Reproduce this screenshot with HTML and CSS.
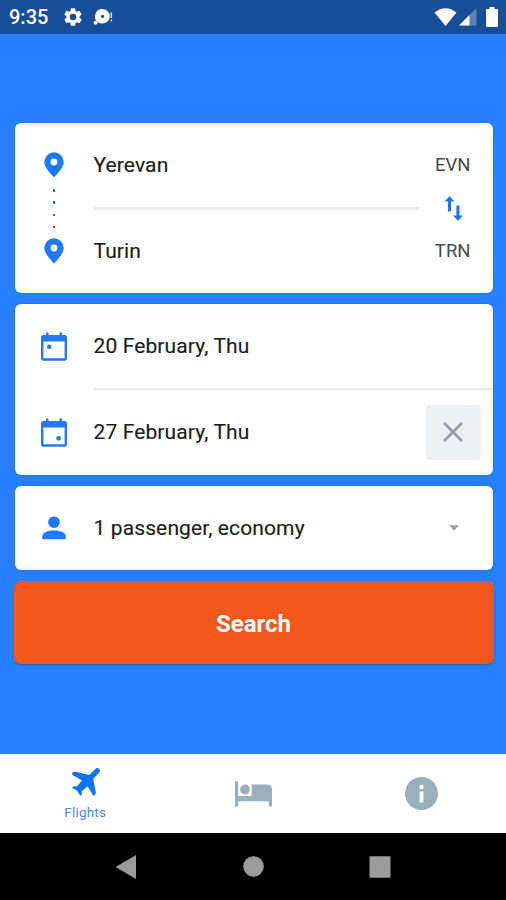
FILE: index.html
```html
<!DOCTYPE html>
<html lang="en">
<head>
<meta charset="utf-8">
<title>Flights</title>
<link rel="stylesheet" href="styles.css">
</head>
<body>
<header class="status">
  <span class="clock">9:35</span>
  <svg class="gear" width="22" height="22" viewBox="0 0 24 24"><path d="M19.14 12.94c.04-.3.06-.61.06-.94s-.02-.64-.07-.94l2.03-1.58c.18-.14.23-.41.12-.61l-1.92-3.32c-.12-.22-.37-.29-.59-.22l-2.39.96c-.5-.38-1.03-.7-1.62-.94L14.4 2.81c-.04-.24-.24-.41-.48-.41h-3.84c-.24 0-.43.17-.47.41l-.36 2.54c-.59.24-1.13.57-1.62.94l-2.39-.96c-.22-.08-.47 0-.59.22L2.74 8.87c-.12.21-.08.47.12.61l2.03 1.58c-.05.3-.09.63-.09.94s.02.64.07.94l-2.03 1.58c-.18.14-.23.41-.12.61l1.92 3.32c.12.22.37.29.59.22l2.39-.96c.5.38 1.03.7 1.62.94l.36 2.54c.05.24.24.41.48.41h3.84c.24 0 .44-.17.47-.41l.36-2.54c.59-.24 1.13-.56 1.62-.94l2.39.96c.22.08.47 0 .59-.22l1.92-3.32c.12-.22.07-.47-.12-.61zM12 15.600A3.600 3.600 0 1 1 12 8.400a3.600 3.600 0 0 1 0 7.200z"/></svg>
  <svg class="disc" width="20" height="18" viewBox="0 0 20 18"><path fill-rule="evenodd" d="M9.500 1a7.300 7.300 0 1 1 0 14.600a7.300 7.300 0 0 1-4.500-1.400a7.300 7.300 0 0 1 4.500-13.200zM9.500 6.800a1.600 1.600 0 1 0 0 3.200a1.600 1.600 0 0 0 0-3.200z"/><circle cx="2.600" cy="14.800" r="2"/><path opacity=".8" d="M17.500 4.500h1.600v5.500h-1.600zM17.500 11.500h1.600v2h-1.600z"/></svg>
  <span class="signals">
    <svg width="23" height="20" viewBox="0 0 23 20"><path d="M.5 5.500Q11.500-3 22.500 5.500L11.500 19z"/></svg>
    <svg width="18" height="18" viewBox="0 0 18 18"><path opacity=".3" d="M17.500 0v17.500H0z"/><path d="M10.500 7v10.500H0z"/></svg>
    <svg class="battery" width="12" height="20" viewBox="0 0 12 20"><path d="M3.500 0h5v2H11q1 0 1 1v16q0 1-1 1H1q-1 0-1-1V3q0-1 1-1h2.500z"/></svg>
  </span>
</header>

<main class="app">
  <section class="card route">
    <div class="pins">
      <svg width="20" height="26" viewBox="0 0 20 26"><path fill-rule="evenodd" d="M10 .3a9.700 9.700 0 0 1 9.700 9.700C19.700 15 14.500 20.500 10 25.500C5.500 20.500.3 15 .3 10A9.700 9.700 0 0 1 10 .3zM10 6.600a3.400 3.400 0 1 0 0 6.800a3.400 3.400 0 0 0 0-6.800z"/></svg>
      <span class="dots"><i></i><i></i><i></i><i></i></span>
      <svg width="20" height="26" viewBox="0 0 20 26"><path fill-rule="evenodd" d="M10 .3a9.700 9.700 0 0 1 9.700 9.700C19.700 15 14.500 20.500 10 25.500C5.500 20.500.3 15 .3 10A9.700 9.700 0 0 1 10 .3zM10 6.600a3.400 3.400 0 1 0 0 6.800a3.400 3.400 0 0 0 0-6.800z"/></svg>
    </div>
    <div class="cities">
      <div class="place"><span class="label">Yerevan</span><span class="code">EVN</span></div>
      <div class="swap">
        <hr>
        <svg width="20" height="27" viewBox="0 0 20 27"><path d="M5.500 1.200L10.500 6.600H7V16.500H4V6.600H.5zM13.900 25.800L8.900 20.400H12.400V10.500h3V20.400h3.500z"/></svg>
      </div>
      <div class="place"><span class="label">Turin</span><span class="code">TRN</span></div>
    </div>
  </section>

  <section class="card dates">
    <div class="row">
      <svg class="icon" width="26" height="29" viewBox="0 0 26 29"><path fill-rule="evenodd" d="M5 .5h2.400V3h11.200V.5H21V3h2.500Q26 3 26 5.500v20.700q0 2.500-2.500 2.500h-21Q0 28.700 0 26.200V5.500Q0 3 2.500 3H5zM2.400 9.500v16.700h21.200V9.500z"/><circle cx="8.200" cy="14.800" r="2.200"/></svg>
      <span class="label">20 February, Thu</span>
    </div>
    <hr>
    <div class="row">
      <svg class="icon" width="26" height="29" viewBox="0 0 26 29"><path fill-rule="evenodd" d="M5 .5h2.400V3h11.200V.5H21V3h2.500Q26 3 26 5.500v20.700q0 2.500-2.500 2.500h-21Q0 28.700 0 26.200V5.500Q0 3 2.500 3H5zM2.400 9.500v16.700h21.200V9.500z"/><circle cx="17.600" cy="20.300" r="2.400"/></svg>
      <span class="label">27 February, Thu</span>
      <button class="clear" aria-label="Clear"><svg width="20" height="20" viewBox="0 0 20 20"><path d="M1 1l18 18M19 1L1 19"/></svg></button>
    </div>
  </section>

  <section class="card people">
    <div class="row">
      <svg class="icon" width="24" height="24" viewBox="0 0 24 24"><circle cx="12" cy="6.200" r="5.800"/><path d="M.3 23.300V20C.3 16.300 6.500 14.500 12 14.500S23.700 16.300 23.700 20v3.300z"/></svg>
      <span class="label">1 passenger, economy</span>
      <svg class="caret" width="10" height="6" viewBox="0 0 10 6"><path d="M0 .3h10L5 5.700z"/></svg>
    </div>
  </section>

  <button class="search">Search</button>
</main>

<nav class="tabs">
  <a class="tab active">
    <svg width="28" height="28" viewBox="0 0 28 28"><path d="M27.200.9C28.200 1.900 28.200 3.600 27.200 4.600L21.200 10.800L24 25.600L21.500 28L15.600 18.200L9.600 23.200L10 26.500L8.300 28L5.200 22.800L0 19.800L1.600 18.200L4.900 18.500L9.900 12.500L.2 6.800V4.700L2.300 3.600L17.300 7L23.400.9C24.400-.2 26.100-.2 27.200.9z"/></svg>
    <span>Flights</span>
  </a>
  <a class="tab">
    <svg width="37" height="26" viewBox="0 0 37 26"><path d="M0 .3h3.200v14.700h13.500V3.500H32q5 0 5 5v17h-3.200v-5.200H3.200v5.200H0z"/><circle cx="10" cy="8.500" r="4.900"/></svg>
  </a>
  <a class="tab">
    <svg width="33" height="33" viewBox="0 0 33 33"><path fill-rule="evenodd" d="M16.500 0a16.500 16.500 0 1 1 0 33a16.500 16.500 0 0 1 0-33zM14.600 14.500v11h3.800v-11zM16.500 7.800a2.200 2.200 0 1 0 0 4.400a2.200 2.200 0 0 0 0-4.400z"/></svg>
  </a>
</nav>

<footer class="system">
  <svg width="22" height="26" viewBox="0 0 22 26"><path d="M21 1v24L.5 13z"/></svg>
  <svg width="21" height="21" viewBox="0 0 21 21"><circle cx="10.500" cy="10.500" r="10.300"/></svg>
  <svg width="22" height="22" viewBox="0 0 22 22"><rect x=".5" y=".2" width="21" height="21.500" rx="1"/></svg>
</footer>
</body>
</html>
```
FILE: styles.css
```css
* { box-sizing: border-box; }
body {
  margin: 0;
  width: 506px;
  height: 900px;
  display: flex;
  flex-direction: column;
  overflow: hidden;
  background: #2680ff;
  font-family: Roboto, "Liberation Sans", sans-serif;
  color: #1c1c1c;
}
svg { display: block; flex: none; fill: currentColor; }
hr { border: 0; margin: 0; background: #ebebeb; }
button { border: 0; padding: 0; font: inherit; }

.status {
  height: 34px;
  flex: none;
  display: flex;
  align-items: center;
  padding: 0 8px 0 9px;
  background: #184d99;
  color: #fff;
}
.clock { width: 53px; font-size: 20px; font-weight: 500; line-height: 34px; }
.disc { margin-left: 9px; }
.signals { margin-left: auto; display: flex; align-items: center; }
.signals svg + svg { margin-left: 2px; }
.signals .battery { margin-left: 9px; }

.app {
  height: 720px;
  flex: none;
  display: flex;
  flex-direction: column;
  gap: 11px;
  padding: 88.500px 13.500px 0 14.500px;
}
.card { flex: none; background: #fff; border-radius: 6px; box-shadow: 0 0 2px #0864e8; }
.label { font-size: 21px; letter-spacing: .12px; -webkit-text-stroke: .15px; }

.route { height: 170.500px; display: flex; }
.pins {
  width: 79px;
  padding-top: 29.500px;
  display: flex;
  flex-direction: column;
  align-items: center;
  color: #1b7aff;
}
.dots { height: 60px; padding: 11px 0 9.500px; display: flex; flex-direction: column; justify-content: space-between; }
.dots i { width: 2.500px; height: 2.500px; background: #2b68ee; }
.cities { flex: 1; }
.place { height: 84px; display: flex; align-items: center; justify-content: space-between; padding-right: 22px; }
.place:last-child { padding-bottom: 1px; }
.code { font-size: 18.500px; color: #484848; }
.swap { height: 3px; display: flex; align-items: center; }
.swap hr { width: 326px; height: 3px; }
.swap svg { margin-left: 24px; color: #1b74fa; }

.dates { height: 170.500px; }
.row { height: 84px; display: flex; align-items: center; }
.row .icon { margin: 0 27px 0 26px; color: #2478f8; }
.dates hr { height: 2px; margin: 0 1px 0 79px; }
.clear {
  width: 55px;
  height: 55px;
  margin-left: auto;
  margin-right: 12px;
  border-radius: 4px;
  background: #eceff4;
  display: flex;
  align-items: center;
  justify-content: center;
}
.clear svg { stroke: #919bab; stroke-width: 2.500; }
.people { height: 84px; }
.people .icon { margin: 0 28px 0 27px; color: #1b7aff; }
.caret { margin-left: auto; margin-right: 34px; color: #9aa2ac; }
.search {
  flex: none;
  height: 83px;
  margin: 0 -1px;
  padding-top: 3px;
  border-radius: 7px;
  background: #f2571b;
  color: #fff;
  font-size: 24px;
  font-weight: 700;
  box-shadow: 0 1px 2px #1d5ab5;
}

.tabs { height: 79px; flex: none; display: grid; grid-template-columns: repeat(3, 1fr); padding-left: 1px; background: #fff; color: #9aafbc; }
.tab { display: flex; flex-direction: column; align-items: center; justify-content: center; }
.active { padding-top: 1px; color: #0d72fb; }
.active svg { margin-left: 2px; }
.active span { margin-top: 8px; font-size: 13.500px; line-height: 16px; letter-spacing: .2px; color: #5385f0; }
.system { height: 67px; flex: none; display: flex; align-items: center; justify-content: space-between; padding: 0 115px; background: #000; color: #9b9b9b; }
```
